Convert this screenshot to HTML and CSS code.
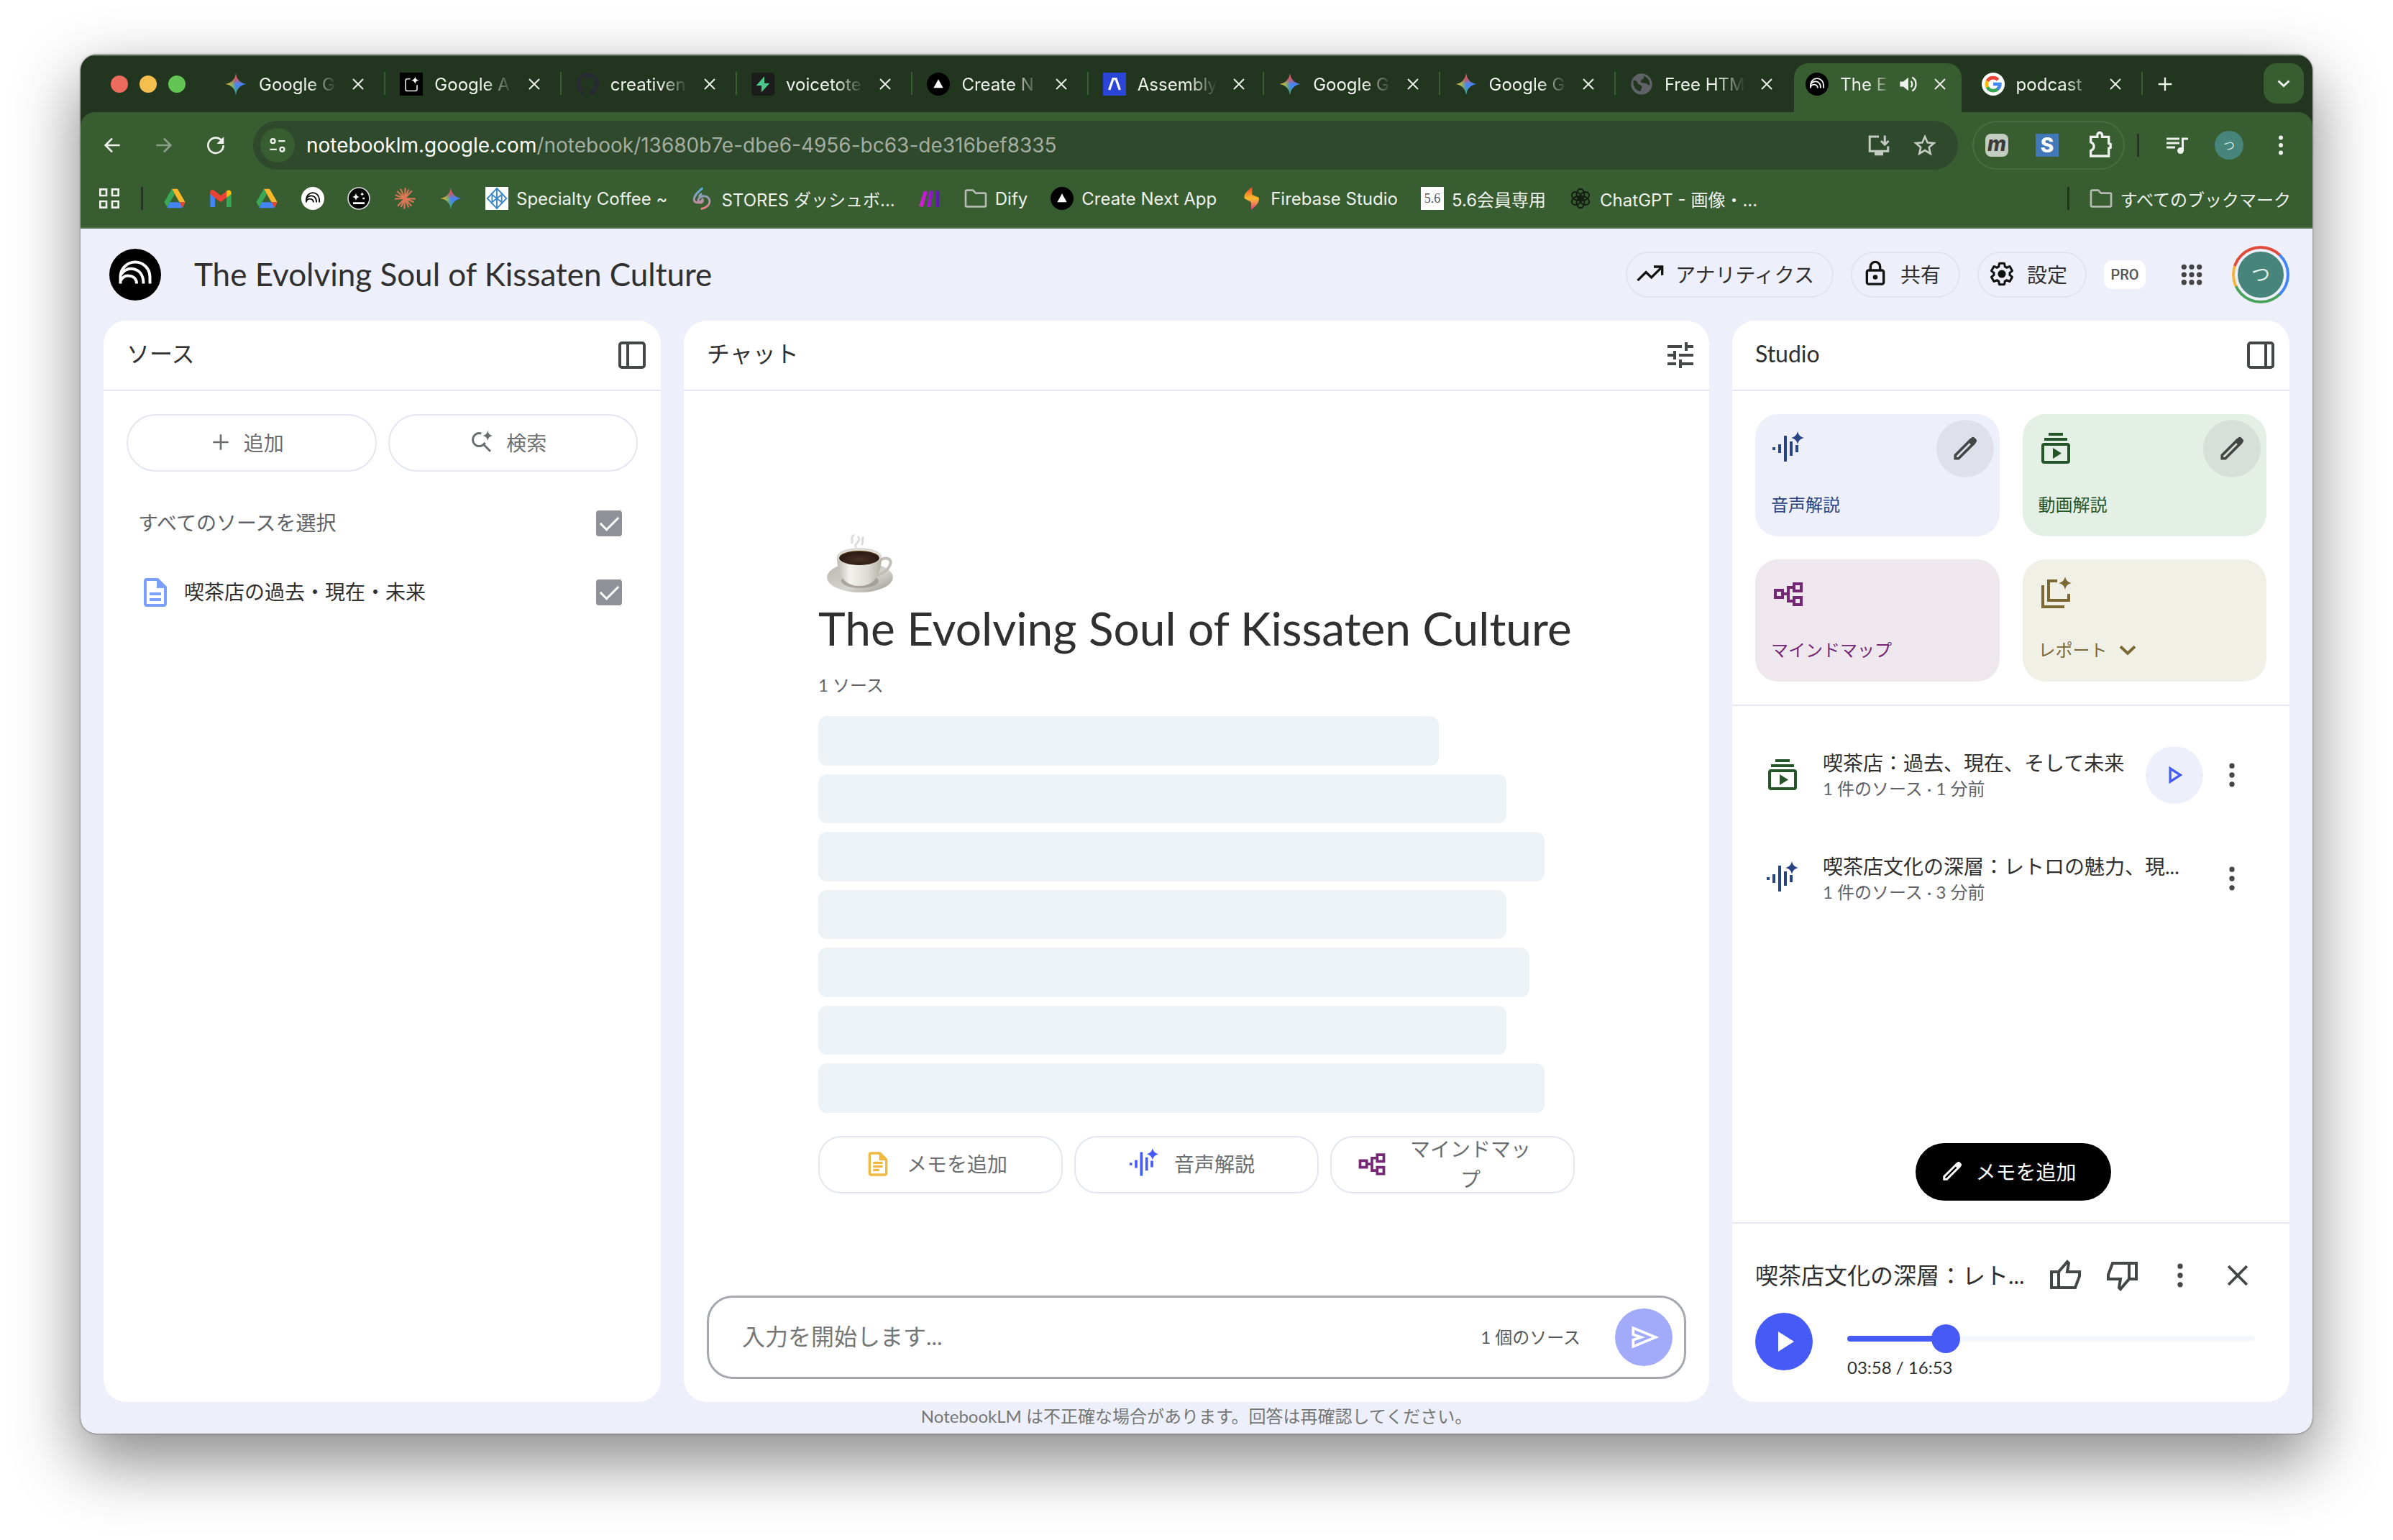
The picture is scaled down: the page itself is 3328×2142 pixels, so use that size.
FILE: index.html
```html
<!DOCTYPE html>
<html lang="ja">
<head>
    <meta charset="UTF-8">
    <meta name="viewport" content="width=device-width, initial-scale=1.0">
    <title>The Evolving Soul of Kissaten Culture - NotebookLM</title>
    <link rel="stylesheet" href="styles.css">
</head>
<body>
    <!-- icon set -->
    <svg class="defs" aria-hidden="true">
        <defs>
            <linearGradient id="gemBase" x1="0" x2="1" y1="0" y2="0">
                <stop offset="0" stop-color="#f5c12e"/><stop offset=".35" stop-color="#7fae6a"/><stop offset=".5" stop-color="#4a86f0"/><stop offset="1" stop-color="#3f82f5"/>
            </linearGradient>
            <linearGradient id="gemTop" x1="0" x2="0" y1="0" y2="1">
                <stop offset="0" stop-color="#ee4a44"/><stop offset=".25" stop-color="#ee4a44" stop-opacity=".8"/><stop offset=".5" stop-color="#ee4a44" stop-opacity="0"/>
            </linearGradient>
            <linearGradient id="gemBottom" x1="0" x2="0" y1="0" y2="1">
                <stop offset=".6" stop-color="#3cb15a" stop-opacity="0"/><stop offset="1" stop-color="#3cb15a"/>
            </linearGradient>
            <linearGradient id="storesFill" x1="0" x2="0" y1="0" y2="1">
                <stop offset="0" stop-color="#4fb3d9"/><stop offset="1" stop-color="#ee7f86"/>
            </linearGradient>
            <linearGradient id="fireFill" x1="0" x2="0" y1="0" y2="1">
                <stop offset="0" stop-color="#e8452c"/><stop offset=".5" stop-color="#fdbb2d"/><stop offset="1" stop-color="#d93a86"/>
            </linearGradient>
            <linearGradient id="makeFill" x1="0" x2="1" y1="0" y2="0">
                <stop offset="0" stop-color="#e321d6"/><stop offset="1" stop-color="#5b14b8"/>
            </linearGradient>
            <linearGradient id="cupFill" x1="0" x2="1" y1="0" y2="0">
                <stop offset="0" stop-color="#bdbab2"/><stop offset=".3" stop-color="#f3f2ee"/><stop offset=".7" stop-color="#dddad3"/><stop offset="1" stop-color="#b3afa6"/>
            </linearGradient>
            <linearGradient id="saucerFill" x1="0" x2="1" y1="0" y2="1">
                <stop offset="0" stop-color="#b9b6af"/><stop offset=".6" stop-color="#d5d3cd"/><stop offset="1" stop-color="#9a978f"/>
            </linearGradient>
            <radialGradient id="coffeeFill" cx=".5" cy=".6" r=".6">
                <stop offset="0" stop-color="#4a3227"/><stop offset=".8" stop-color="#2c1a12"/><stop offset="1" stop-color="#5a3a14"/>
            </radialGradient>

            <symbol id="gemini" viewBox="0 0 24 24">
                <path fill="url(#gemBase)" d="M12 1c.8 6.200 4.800 10.200 11 11-6.200.8-10.200 4.800-11 11-.8-6.200-4.800-10.200-11-11 6.200-.8 10.200-4.800 11-11z"/>
                <path fill="url(#gemTop)" d="M12 1c.8 6.200 4.800 10.200 11 11-6.200.8-10.200 4.800-11 11-.8-6.200-4.800-10.200-11-11 6.200-.8 10.200-4.800 11-11z"/>
                <path fill="url(#gemBottom)" d="M12 1c.8 6.200 4.800 10.200 11 11-6.200.8-10.200 4.800-11 11-.8-6.200-4.800-10.200-11-11 6.200-.8 10.200-4.800 11-11z"/>
            </symbol>
            <symbol id="close" viewBox="0 0 24 24"><path class="line" d="M5 5l14 14M19 5L5 19"/></symbol>
            <symbol id="plus" viewBox="0 0 24 24"><path class="line" d="M12 4v16M4 12h16"/></symbol>
            <symbol id="chevron" viewBox="0 0 24 24"><path class="line bold" d="M4.500 8.500l7.500 7 7.500-7"/></symbol>
            <symbol id="back" viewBox="0 0 24 24"><path class="line" d="M20 12H5M12 5l-7 7 7 7"/></symbol>
            <symbol id="forward" viewBox="0 0 24 24"><path class="line" d="M4 12h15M12 5l7 7-7 7"/></symbol>
            <symbol id="reload" viewBox="0 0 24 24"><path class="line" d="M18.500 7.500A8 8 0 1 0 20 12"/><path fill="currentColor" d="M20.500 3v7.500H13z"/></symbol>
            <symbol id="siteinfo" viewBox="0 0 24 24"><g class="line"><circle cx="6.500" cy="7" r="2.500"/><path d="M13 7h8M3 17h8"/><circle cx="17.500" cy="17" r="2.500"/></g></symbol>
            <symbol id="install" viewBox="0 0 24 24"><path class="line" d="M12 4H3.500v13.500h17V13M17.500 3v8M14 8l3.500 3.500L21 8"/><path fill="currentColor" d="M8 18h8v3.500H8z"/></symbol>
            <symbol id="star" viewBox="0 0 24 24"><path class="line" d="M12 3l2.700 6.200 6.700.6-5.100 4.400 1.500 6.600-5.800-3.500-5.800 3.500 1.500-6.600-5.100-4.400 6.700-.6z"/></symbol>
            <symbol id="puzzle" viewBox="0 0 24 24"><path class="line" d="M4 5h5.500V3.500a1.500 1.500 0 0 1 4 0V5H19v5.500l1.500.5v3l-1.500.5V21H4v-4.500c3.500-1.500 3.500-5.500 0-7z"/></symbol>
            <symbol id="queue" viewBox="0 0 24 24"><path fill="currentColor" d="M14 5H2v2h12zM14 9H2v2h12zM2 15h8v-2H2zM16 5v9.200c-.3-.1-.6-.2-1-.2-1.700 0-3 1.300-3 3s1.300 3 3 3 3-1.300 3-3V7h4V5z"/></symbol>
            <symbol id="dots" viewBox="0 0 24 24"><g fill="currentColor"><circle cx="12" cy="5" r="2"/><circle cx="12" cy="12" r="2"/><circle cx="12" cy="19" r="2"/></g></symbol>
            <symbol id="speaker" viewBox="0 0 24 24"><path fill="currentColor" d="M2 9h4l6-5v16l-6-5H2z"/><path class="line" d="M15 8.500c2 1.500 2 5.500 0 7M16.500 4c6 3 6 13 0 16"/></symbol>
            <symbol id="globe" viewBox="0 0 24 24"><circle cx="12" cy="12" r="11" fill="#5f6368"/><path fill="#22361f" d="M3.500 8c3 0 4 1 4.500 3s3 1 4 3-1 3-1 5.500c-5-.5-8.500-5-7.500-11.500zM12 3c2 0 3 1 2 3s-3 1-3 3 3 2 5 2 3 3 4.500 2c.5-5-3-9.500-8.500-10z"/></symbol>
            <symbol id="github" viewBox="0 0 16 16"><path fill="#272c33" d="M8 0C3.580 0 0 3.580 0 8c0 3.540 2.290 6.530 5.470 7.590.4.070.55-.17.55-.38 0-.19-.01-.82-.01-1.490-2.010.37-2.530-.49-2.690-.94-.09-.23-.48-.94-.82-1.130-.28-.15-.68-.52-.01-.53.63-.01 1.080.58 1.230.82.72 1.210 1.870.87 2.330.66.07-.52.28-.87.51-1.070-1.780-.2-3.640-.89-3.640-3.950 0-.87.31-1.590.82-2.150-.08-.2-.36-1.020.08-2.120 0 0 .67-.21 2.200.82.64-.18 1.320-.27 2-.27s1.360.09 2 .27c1.530-1.040 2.200-.82 2.200-.82.44 1.100.16 1.920.08 2.120.51.56.82 1.270.82 2.150 0 3.070-1.870 3.750-3.650 3.950.29.25.54.73.54 1.480 0 1.070-.01 1.930-.01 2.200 0 .21.15.46.55.38A8.010 8.010 0 0 0 16 8c0-4.420-3.580-8-8-8z"/></symbol>
            <symbol id="aistudio" viewBox="0 0 24 24"><path fill="#000" d="M0 0h24v24H0z"/><path fill="none" stroke="#c9c9c9" stroke-width="1.400" d="M11 6.500H8a2 2 0 0 0-2 2V17a2 2 0 0 0 2 2h8a2 2 0 0 0 2-2v-4"/><path fill="#fff" d="M16 4c.3 2.500 1.500 3.700 4 4-2.500.3-3.700 1.500-4 4-.3-2.500-1.500-3.700-4-4 2.500-.3 3.700-1.500 4-4z"/></symbol>
            <symbol id="supabase" viewBox="0 0 24 24"><rect width="24" height="24" rx="3" fill="#1c1c1c"/><path fill="#4cc98a" d="M13.500 4v7H19l-8.500 9.500V13.500H5z"/></symbol>
            <symbol id="next" viewBox="0 0 24 24"><circle cx="12" cy="12" r="12" fill="#000"/><path fill="#fff" d="M12 7l5 9H7z"/></symbol>
            <symbol id="assembly" viewBox="0 0 24 24"><path fill="#2b45d6" d="M0 0h24v24H0z"/><path fill="none" stroke="#fff" stroke-width="2.500" d="M6.500 18L10.500 6.500h3L17.500 18"/></symbol>
            <symbol id="google" viewBox="0 0 24 24"><circle cx="12" cy="12" r="12" fill="#fff"/><g fill="none" stroke-width="3.500"><path stroke="#ea4335" d="M17 7.500A7 7 0 0 0 5.900 8.800"/><path stroke="#fbbc05" d="M6 8.600a7 7 0 0 0 0 6.800"/><path stroke="#34a853" d="M5.900 15.200A7 7 0 0 0 16.800 17"/><path stroke="#4285f4" d="M16.500 17.300A7 7 0 0 0 19 12h-7"/></g></symbol>
            <symbol id="notebook" viewBox="0 0 72 72"><g fill="none" stroke="currentColor" stroke-width="4"><path d="M15.500 48.500V39a20.500 20.500 0 0 1 41 0v9.500"/><path d="M16 36c5-7 11-9 17-8 9 1.500 14.500 9 14.500 20.500"/><path d="M16 44c3-5.500 7-7 11-6.500 7 .5 11 5 11 11"/></g></symbol>
            <symbol id="drive" viewBox="0 0 24 24"><path fill="#fbb829" d="M9 2h6l8 14h-6z"/><path fill="#3aa757" d="M9 2l3 5.500L4 21l-3-5z"/><path fill="#4285f4" d="M7 16h16l-3 6H4z"/><path fill="#ea4335" d="M17 16h6l-3 6z"/></symbol>
            <symbol id="gmail" viewBox="0 0 24 24"><path fill="#4285f4" d="M1 7l5 4v10H1z"/><path fill="#34a853" d="M18 11l5-4v14h-5z"/><path fill="#ea4335" d="M1 5c0-2 2.500-2.500 4-1.500L12 9l7-5.500v6.800L12 16 1 7.500z"/><path fill="#fbbc04" d="M18 4.500c2-2 5-1 5 1.500v1.500L18 11z"/></symbol>
            <symbol id="spark-face" viewBox="0 0 24 24"><circle cx="12" cy="12" r="11.200" fill="#000" stroke="#ddd" stroke-width="1.200"/><path fill="#fff" d="M9 6c.4 3 1.300 4 4 4.500-2.700.4-3.600 1.500-4 4-.4-2.500-1.300-3.600-4-4 2.700-.5 3.600-1.500 4-4.500zM15.500 5c.2 1.500.8 2.200 2.300 2.500-1.500.3-2.100 1-2.300 2.500-.2-1.500-.8-2.200-2.300-2.500 1.500-.3 2.100-1 2.300-2.500zM6 16h12v2H6zM16 11h2v2h-2z"/></symbol>
            <symbol id="claude" viewBox="0 0 24 24"><path fill="none" stroke="#d97757" stroke-width="1.600" d="M12.500 1L12 12l-.5 11M1.500 12.500L12 12l11 .5M4 4.500L12 12l7 8M19.500 4L12 12l-7.500 8M7.500 2L12 12l4 9.500M16 2.500L12 12l-4 9M2 8.500L12 12l9.500 4"/></symbol>
            <symbol id="coffeeassoc" viewBox="0 0 24 24"><path fill="#fff" d="M0 0h24v24H0z"/><g fill="none" stroke="#3b86c6" stroke-width="1.400"><path d="M12 1.500L22 12 12 22.500 2 12z"/><path d="M12 1v22M7 6v12M17 6v12M7 8l5 4 5-4M7 16l5-4 5 4"/></g></symbol>
            <symbol id="stores" viewBox="0 0 24 24"><g fill="none" stroke="url(#storesFill)" stroke-width="2.200"><path d="M13 1C7 6 3 10 4 14c1 3 6 3 8 0M11 23c6-1 10-5 9-9-1-5-8-6-11-2-2 3 1 6 3 4 2-1 1-3 0-4M12 7c-2 1-3 3-2 4"/></g></symbol>
            <symbol id="make" viewBox="0 0 24 24"><path fill="url(#makeFill)" d="M6 4l4 1-5 16-4-1zM12 4h4l-3 17H9zM18 4h4v17h-4z"/></symbol>
            <symbol id="folder" viewBox="0 0 24 24"><path class="line" d="M1.500 4.500a1 1 0 0 1 1-1H9l3 3h9.500a1 1 0 0 1 1 1v12a1 1 0 0 1-1 1h-19a1 1 0 0 1-1-1z"/></symbol>
            <symbol id="firebase" viewBox="0 0 24 24"><path fill="url(#fireFill)" d="M13 0v8l7 3c1 5-3 9-8 13v-8l-7-4C4 7 8 4 13 0z"/></symbol>
            <symbol id="openai" viewBox="0 0 24 24"><g fill="none" stroke="#152013" stroke-width="1.600"><ellipse cx="12" cy="7.500" rx="4" ry="5.500"/><ellipse cx="12" cy="7.500" rx="4" ry="5.500" transform="rotate(60 12 12)"/><ellipse cx="12" cy="7.500" rx="4" ry="5.500" transform="rotate(120 12 12)"/><ellipse cx="12" cy="7.500" rx="4" ry="5.500" transform="rotate(180 12 12)"/><ellipse cx="12" cy="7.500" rx="4" ry="5.500" transform="rotate(240 12 12)"/><ellipse cx="12" cy="7.500" rx="4" ry="5.500" transform="rotate(300 12 12)"/></g></symbol>
            <symbol id="apps-outline" viewBox="0 0 24 24"><path class="line" d="M2.500 2.500h6.500v6.500H2.500zM15 2.500h6.500v6.500H15zM2.500 15h6.500v6.500H2.500zM15 15h6.500v6.500H15z"/></symbol>
            <symbol id="apps" viewBox="0 0 24 24"><g fill="currentColor"><circle cx="4" cy="4" r="2.700"/><circle cx="12" cy="4" r="2.700"/><circle cx="20" cy="4" r="2.700"/><circle cx="4" cy="12" r="2.700"/><circle cx="12" cy="12" r="2.700"/><circle cx="20" cy="12" r="2.700"/><circle cx="4" cy="20" r="2.700"/><circle cx="12" cy="20" r="2.700"/><circle cx="20" cy="20" r="2.700"/></g></symbol>
            <symbol id="trending" viewBox="0 0 24 24"><path class="line" d="M1.500 17.500l7-7 4.500 4.500L21.500 6.500M15 6h7v7"/></symbol>
            <symbol id="lock" viewBox="0 0 24 24"><g class="line"><rect x="5" y="9" width="14" height="11.500" rx="1.500"/><path d="M8 9V6a4 4 0 0 1 8 0v3"/></g><circle cx="12" cy="14.700" r="2" fill="currentColor"/></symbol>
            <symbol id="gear" viewBox="-1 -1 26 26"><path class="line" d="M19.140 12.940c.04-.3.06-.61.06-.94 0-.32-.02-.64-.07-.94l2.030-1.580c.18-.14.23-.41.12-.61l-1.920-3.320c-.12-.22-.37-.29-.59-.22l-2.390.96c-.5-.38-1.030-.7-1.620-.94l-.36-2.540c-.04-.24-.24-.41-.48-.41h-3.840c-.24 0-.43.17-.47.41l-.36 2.540c-.59.24-1.130.57-1.620.94l-2.390-.96c-.22-.08-.47 0-.59.22L2.740 8.870c-.12.21-.08.47.12.61l2.030 1.580c-.05.3-.09.63-.09.94s.02.64.07.94l-2.030 1.580c-.18.14-.23.41-.12.61l1.920 3.320c.12.22.37.29.59.22l2.390-.96c.5.38 1.030.7 1.620.94l.36 2.540c.05.24.24.41.48.41h3.840c.24 0 .44-.17.47-.41l.36-2.540c.59-.24 1.130-.56 1.620-.94l2.390.96c.22.08.47 0 .59-.22l1.920-3.320c.12-.22.07-.47-.12-.61z"/><circle cx="12" cy="12" r="3.600" fill="currentColor"/></symbol>
            <symbol id="panel-left" viewBox="0 0 24 24"><g class="line"><rect x="3.500" y="3.500" width="17" height="17" rx="1.500"/><path d="M9 3v18"/></g></symbol>
            <symbol id="panel-right" viewBox="0 0 24 24"><g class="line"><rect x="3.500" y="3.500" width="17" height="17" rx="1.500"/><path d="M15.500 3v18"/></g></symbol>
            <symbol id="tune" viewBox="0 0 24 24"><path fill="currentColor" d="M3 17v2h6v-2zM3 5v2h10V5zm10 16v-2h8v-2h-8v-2h-2v6zM7 9v2H3v2h4v2h2V9zm14 4v-2H11v2zm-6-4h2V7h4V5h-4V3h-2z"/></symbol>
            <symbol id="search-spark" viewBox="0 0 24 24"><path class="line" d="M11.500 4A6 6 0 1 0 15 12.500M14 14.500l6 6"/><path fill="currentColor" d="M17.500 1c.5 3 1.700 4.300 4.500 5-2.800.7-4 2-4.500 5-.5-3-1.700-4.300-4.500-5 2.800-.7 4-2 4.500-5z"/></symbol>
            <symbol id="doc" viewBox="0 0 24 24"><path fill="currentColor" d="M8 16h8v2H8zm0-4h8v2H8zm6-10H6c-1.100 0-2 .9-2 2v16c0 1.100.89 2 1.990 2H18c1.100 0 2-.9 2-2V8zm4 18H6V4h7v5h5z"/></symbol>
            <symbol id="note" viewBox="0 0 24 24"><path fill="currentColor" d="M8 16h5v2H8zm0-3h8v2H8zm0-3h8v2H8zm6-8H6c-1.100 0-2 .9-2 2v16c0 1.100.89 2 1.990 2H18c1.100 0 2-.9 2-2V8zm4 18H6V4h7v5h5z"/></symbol>
            <symbol id="audio" viewBox="0 0 24 24"><path class="line" d="M2 11v2M6 9v6M10 3v18M14 7v10M18 9.500v5"/><path fill="currentColor" d="M18.500 0c.6 2.600 1.900 3.800 4.500 4.500-2.600.7-3.900 1.900-4.500 4.500-.6-2.600-1.900-3.800-4.500-4.500 2.600-.7 3.900-1.900 4.500-4.500z"/></symbol>
            <symbol id="video" viewBox="0 0 24 24"><path class="line" d="M7 2h10M4 5.500h16"/><rect class="line" x="3" y="9" width="18" height="12.500" rx="1"/><path fill="currentColor" d="M10 11.500v7.500l6-3.750z"/></symbol>
            <symbol id="mindmap" viewBox="0 0 24 24"><path class="line" d="M3 9.500h5v5H3zM16 5h5v5h-5zM16 14.500h5v5h-5zM8 12h4M16 7.500h-4v9.500h4"/></symbol>
            <symbol id="report" viewBox="0 0 24 24"><path class="line" d="M3 6v15h15M13 3H7v13.500h14V12"/><path fill="currentColor" d="M18.500 0c.6 2.600 1.900 3.800 4.500 4.500-2.600.7-3.900 1.900-4.500 4.500-.6-2.600-1.900-3.800-4.500-4.500 2.600-.7 3.900-1.900 4.500-4.500z"/></symbol>
            <symbol id="pencil" viewBox="0 0 24 24"><path class="line" d="M4.500 19.500V17L16 5.500 18.500 8 7 19.500z"/><path fill="currentColor" d="M14 6.500l2.700-2.700c.8-.8 1.700-.8 2.500 0l1 1c.8.8.8 1.700 0 2.500L17.500 10z"/></symbol>
            <symbol id="play" viewBox="0 0 24 24"><path fill="currentColor" d="M8 5v14l11-7z"/></symbol>
            <symbol id="play-outline" viewBox="0 0 24 24"><path class="line" d="M8.500 6.500v11l8.500-5.500z"/></symbol>
            <symbol id="send" viewBox="0 0 24 24"><path class="line" d="M4 5l17 7-17 7v-5l6-2-6-2z"/></symbol>
            <symbol id="thumb-up" viewBox="0 0 24 24"><path class="line" d="M7.500 20.500H2.500v-11h5zM7.500 9.500l6-7 1 1-1 6H22v3l-3 8H7.500"/></symbol>
            <symbol id="thumb-down" viewBox="0 0 24 24"><path class="line" d="M16.500 3.500h5v11h-5zM16.500 14.500l-6 7-1-1 1-6H2v-3l3-8h11.500"/></symbol>
        </defs>
    </svg>

    <div class="window">
        <div class="tab-strip">
            <div class="lights"><span class="light red"></span><span class="light yellow"></span><span class="light green"></span></div>
            <div class="tabs">
                <div class="tab"><svg class="ic32"><use href="#gemini"/></svg><span class="tab-title">Google G</span><button class="tab-close" aria-label="閉じる"><svg><use href="#close"/></svg></button></div>
                <div class="tab"><svg class="ic32"><use href="#aistudio"/></svg><span class="tab-title">Google A</span><button class="tab-close" aria-label="閉じる"><svg><use href="#close"/></svg></button></div>
                <div class="tab"><svg class="ic32"><use href="#github"/></svg><span class="tab-title">creativen</span><button class="tab-close" aria-label="閉じる"><svg><use href="#close"/></svg></button></div>
                <div class="tab"><svg class="ic32"><use href="#supabase"/></svg><span class="tab-title">voicetote</span><button class="tab-close" aria-label="閉じる"><svg><use href="#close"/></svg></button></div>
                <div class="tab"><svg class="ic32"><use href="#next"/></svg><span class="tab-title">Create N</span><button class="tab-close" aria-label="閉じる"><svg><use href="#close"/></svg></button></div>
                <div class="tab"><svg class="ic32"><use href="#assembly"/></svg><span class="tab-title">Assembly</span><button class="tab-close" aria-label="閉じる"><svg><use href="#close"/></svg></button></div>
                <div class="tab"><svg class="ic32"><use href="#gemini"/></svg><span class="tab-title">Google G</span><button class="tab-close" aria-label="閉じる"><svg><use href="#close"/></svg></button></div>
                <div class="tab"><svg class="ic32"><use href="#gemini"/></svg><span class="tab-title">Google G</span><button class="tab-close" aria-label="閉じる"><svg><use href="#close"/></svg></button></div>
                <div class="tab before-active"><svg class="ic32"><use href="#globe"/></svg><span class="tab-title">Free HTM</span><button class="tab-close" aria-label="閉じる"><svg><use href="#close"/></svg></button></div>
                <div class="tab active"><span class="ic32 nb-badge"><svg class="ic32"><use href="#notebook"/></svg></span><span class="tab-title">The E</span><svg class="ic28 speaker"><use href="#speaker"/></svg><button class="tab-close" aria-label="閉じる"><svg><use href="#close"/></svg></button></div>
                <div class="tab"><svg class="ic32"><use href="#google"/></svg><span class="tab-title">podcast</span><button class="tab-close" aria-label="閉じる"><svg><use href="#close"/></svg></button></div>
            </div>
            <button class="new-tab" aria-label="新しいタブ"><svg class="ic28"><use href="#plus"/></svg></button>
            <button class="tab-search" aria-label="タブを検索"><svg class="ic24"><use href="#chevron"/></svg></button>
        </div>

        <div class="toolbar">
            <div class="nav-row">
                <button class="nav-btn" aria-label="戻る"><svg class="ic32"><use href="#back"/></svg></button>
                <button class="nav-btn dim" aria-label="進む"><svg class="ic32"><use href="#forward"/></svg></button>
                <button class="nav-btn" aria-label="再読み込み"><svg class="ic32"><use href="#reload"/></svg></button>
                <div class="omnibox">
                    <span class="site-info"><svg class="ic28"><use href="#siteinfo"/></svg></span>
                    <div class="url"><span class="host">notebooklm.google.com</span>/notebook/13680b7e-dbe6-4956-bc63-de316bef8335</div>
                    <svg class="ic36"><use href="#install"/></svg>
                    <svg class="ic32"><use href="#star"/></svg>
                </div>
                <div class="extensions">
                    <span class="ext-m">m</span>
                    <span class="ext-s">S</span>
                    <svg class="ic40"><use href="#puzzle"/></svg>
                </div>
                <span class="divider"></span>
                <button class="nav-btn" aria-label="メディア"><svg class="ic36"><use href="#queue"/></svg></button>
                <button class="nav-btn" aria-label="プロフィール"><span class="mini-avatar">つ</span></button>
                <button class="nav-btn" aria-label="メニュー"><svg class="ic36"><use href="#dots"/></svg></button>
            </div>
            <div class="bookmarks">
                <svg class="ic32"><use href="#apps-outline"/></svg>
                <span class="divider"></span>
                <a href="#" aria-label="Drive"><svg class="ic32"><use href="#drive"/></svg></a>
                <a href="#" aria-label="Gmail"><svg class="ic32"><use href="#gmail"/></svg></a>
                <a href="#" aria-label="Drive"><svg class="ic32"><use href="#drive"/></svg></a>
                <a href="#" aria-label="NotebookLM"><span class="ic32 nb-badge light-badge"><svg class="ic32"><use href="#notebook"/></svg></span></a>
                <a href="#" aria-label="AI"><svg class="ic32"><use href="#spark-face"/></svg></a>
                <a href="#" aria-label="Claude"><svg class="ic32"><use href="#claude"/></svg></a>
                <a href="#" aria-label="Gemini"><svg class="ic32"><use href="#gemini"/></svg></a>
                <a href="#"><svg class="ic32"><use href="#coffeeassoc"/></svg>Specialty Coffee ~</a>
                <a href="#"><svg class="ic32"><use href="#stores"/></svg>STORES ダッシュボ...</a>
                <a href="#" aria-label="Make"><svg class="ic32"><use href="#make"/></svg></a>
                <a href="#"><svg class="ic32 grey"><use href="#folder"/></svg>Dify</a>
                <a href="#"><svg class="ic32"><use href="#next"/></svg>Create Next App</a>
                <a href="#"><svg class="ic32"><use href="#firebase"/></svg>Firebase Studio</a>
                <a href="#"><span class="ic32 fav56">5.6</span>5.6会員専用</a>
                <a href="#"><svg class="ic32"><use href="#openai"/></svg>ChatGPT - 画像・...</a>
                <span class="divider push"></span>
                <a href="#"><svg class="ic32 grey"><use href="#folder"/></svg>すべてのブックマーク</a>
            </div>
        </div>

        <div class="app">
            <header class="app-header">
                <a href="#" class="logo" aria-label="NotebookLM"><svg><use href="#notebook"/></svg></a>
                <div class="app-title">The Evolving Soul of Kissaten Culture</div>
                <div class="header-actions">
                    <button class="chip"><svg class="ic40"><use href="#trending"/></svg>アナリティクス</button>
                    <button class="chip"><svg class="ic40"><use href="#lock"/></svg>共有</button>
                    <button class="chip"><svg class="ic40"><use href="#gear"/></svg>設定</button>
                    <span class="pro">PRO</span>
                    <button class="apps-btn" aria-label="アプリ"><svg class="ic32"><use href="#apps"/></svg></button>
                    <span class="avatar"><span>つ</span></span>
                </div>
            </header>

            <main class="panels">
                <section class="panel">
                    <div class="panel-header"><h2>ソース</h2><button class="icon-btn" aria-label="パネルを閉じる"><svg class="ic48"><use href="#panel-left"/></svg></button></div>
                    <div class="source-body">
                        <div class="source-actions">
                            <button class="pill"><svg class="ic32"><use href="#plus"/></svg>追加</button>
                            <button class="pill"><svg class="ic36"><use href="#search-spark"/></svg>検索</button>
                        </div>
                        <div class="source-row select-all"><label for="all">すべてのソースを選択</label><input type="checkbox" id="all" checked></div>
                        <div class="source-row"><svg class="ic48 doc-icon"><use href="#doc"/></svg><label for="src1">喫茶店の過去・現在・未来</label><input type="checkbox" id="src1" checked></div>
                    </div>
                </section>

                <section class="panel">
                    <div class="panel-header"><h2>チャット</h2><button class="icon-btn" aria-label="チャットの設定"><svg class="ic48"><use href="#tune"/></svg></button></div>
                    <div class="chat-body">
                        <div class="overview">
                            <svg class="cup" viewBox="0 0 96 84">
                                <path d="M36 14c4-5-3-8 4-12M43 20c-6-6 9-8 2-16M50 16c4-4-1-8 3-11" fill="none" stroke="#c4c4c4" stroke-opacity=".6" stroke-width="3"/>
                                <ellipse cx="48" cy="61" rx="46" ry="21" fill="url(#saucerFill)"/>
                                <ellipse cx="48" cy="66" rx="26" ry="10" fill="#8f8b82" opacity=".6"/>
                                <path d="M76 37c8-5 17-2 14 6-2 7-11 14-20 16" fill="none" stroke="#c3c0b9" stroke-width="4"/>
                                <path d="M16 32c0 28 12 41 31 41s31-13 31-41z" fill="url(#cupFill)"/>
                                <ellipse cx="47" cy="32" rx="31" ry="12" fill="#dcdad5"/>
                                <ellipse cx="47" cy="34" rx="28" ry="10" fill="url(#coffeeFill)"/>
                            </svg>
                            <h1>The Evolving Soul of Kissaten Culture</h1>
                            <p class="count">1 ソース</p>
                            <div class="skeleton"><span></span><span></span><span></span><span></span><span></span><span></span><span></span></div>
                            <div class="suggestions">
                                <button><svg class="ic40 c-note"><use href="#note"/></svg><span>メモを追加</span></button>
                                <button><svg class="ic44 c-audio"><use href="#audio"/></svg><span>音声解説</span></button>
                                <button><svg class="ic44 c-map"><use href="#mindmap"/></svg><span>マインドマップ</span></button>
                            </div>
                        </div>
                        <form class="prompt">
                            <input type="text" placeholder="入力を開始します..." aria-label="入力">
                            <span class="prompt-count">1 個のソース</span>
                            <button type="button" class="send" aria-label="送信"><svg class="ic44"><use href="#send"/></svg></button>
                        </form>
                    </div>
                </section>

                <section class="panel">
                    <div class="panel-header"><h2>Studio</h2><button class="icon-btn" aria-label="パネルを閉じる"><svg class="ic48"><use href="#panel-right"/></svg></button></div>
                    <div class="cards">
                        <div class="card audio"><svg class="ic48"><use href="#audio"/></svg><span>音声解説</span><button class="edit" aria-label="編集"><svg class="ic44"><use href="#pencil"/></svg></button></div>
                        <div class="card video"><svg class="ic48"><use href="#video"/></svg><span>動画解説</span><button class="edit" aria-label="編集"><svg class="ic44"><use href="#pencil"/></svg></button></div>
                        <div class="card map"><svg class="ic48"><use href="#mindmap"/></svg><span>マインドマップ</span></div>
                        <div class="card report"><svg class="ic48"><use href="#report"/></svg><span>レポート<svg class="ic32"><use href="#chevron"/></svg></span></div>
                    </div>
                    <div class="artifacts">
                        <div class="artifact">
                            <svg class="ic48 c-video"><use href="#video"/></svg>
                            <div class="artifact-text"><h3>喫茶店：過去、現在、そして未来</h3><p>1 件のソース · 1 分前</p></div>
                            <button class="artifact-play" aria-label="再生"><svg class="ic40"><use href="#play-outline"/></svg></button>
                            <button class="more" aria-label="その他"><svg class="ic44"><use href="#dots"/></svg></button>
                        </div>
                        <div class="artifact">
                            <svg class="ic48 c-deep"><use href="#audio"/></svg>
                            <div class="artifact-text"><h3>喫茶店文化の深層：レトロの魅力、現...</h3><p>1 件のソース · 3 分前</p></div>
                            <button class="more" aria-label="その他"><svg class="ic44"><use href="#dots"/></svg></button>
                        </div>
                        <button class="add-note"><svg class="ic36"><use href="#pencil"/></svg>メモを追加</button>
                    </div>
                    <div class="player">
                        <div class="player-top">
                            <div class="player-title">喫茶店文化の深層：レト...</div>
                            <button class="more" aria-label="高評価"><svg class="ic48"><use href="#thumb-up"/></svg></button>
                            <button class="more" aria-label="低評価"><svg class="ic48"><use href="#thumb-down"/></svg></button>
                            <button class="more" aria-label="その他"><svg class="ic44"><use href="#dots"/></svg></button>
                            <button class="more" aria-label="閉じる"><svg class="ic44"><use href="#close"/></svg></button>
                        </div>
                        <div class="player-bottom">
                            <button class="player-play" aria-label="再生"><svg class="ic48"><use href="#play"/></svg></button>
                            <div class="player-track">
                                <input type="range" min="0" max="1013" value="225" aria-label="再生位置">
                                <div class="time">03:58 / 16:53</div>
                            </div>
                        </div>
                    </div>
                </section>
            </main>
            <footer>NotebookLM は不正確な場合があります。回答は再確認してください。</footer>
        </div>
    </div>
</body>
</html>
```
FILE: styles.css
```css
* { box-sizing: border-box; }
body {
    margin: 0;
    min-height: 100vh;
    padding: 76px 112px 148px;
    display: flex;
    background: #fff;
    color: #303030;
    font-family: Lato, "Noto Sans CJK JP", sans-serif;
    font-size: 28px;
}
h1, h2, h3, p { margin: 0; font-weight: 400; }
button {
    border: 0;
    padding: 0;
    background: none;
    color: inherit;
    font: inherit;
    cursor: pointer;
}
a { color: inherit; text-decoration: none; }
svg { flex: none; display: block; }
.defs { position: absolute; width: 0; height: 0; }
.line { fill: none; stroke: currentColor; stroke-width: 2; }
.bold { stroke-width: 3; }
.ic24 { width: 24px; height: 24px; }
.ic28 { width: 28px; height: 28px; }
.ic32 { width: 32px; height: 32px; }
.ic36 { width: 36px; height: 36px; }
.ic40 { width: 40px; height: 40px; }
.ic44 { width: 44px; height: 44px; }
.ic48 { width: 48px; height: 48px; }

.window {
    flex: 1;
    min-width: 0;
    display: flex;
    flex-direction: column;
    border-radius: 22px;
    overflow: hidden;
    background: #22361f;
    box-shadow: 0 0 3px rgba(0, 0, 0, 0.5), 0 36px 90px 4px rgba(0, 0, 0, 0.46);
}

/* browser chrome */
.tab-strip {
    display: flex;
    height: 80px;
    border-top: 2px solid #566b53;
    padding: 0 12px 0 42px;
    font-family: Inter, "Noto Sans CJK JP", sans-serif;
    color: #eef2ec;
}
.lights { display: flex; flex: none; gap: 16px; width: 138px; align-items: center; }
.light { width: 24px; height: 24px; border-radius: 50%; }
.red { background: #ed6a5e; }
.yellow { background: #f5bf4f; }
.green { background: #62c554; }
.tabs { display: flex; flex: 1; min-width: 0; }
.tab {
    position: relative;
    flex: 1;
    min-width: 0;
    display: flex;
    align-items: center;
    padding: 0 20px;
    font-size: 24px;
}
.tab::after {
    content: "";
    width: 2px;
    height: 32px;
    background: #385d31;
    position: absolute;
    right: 0;
    top: 22px;
}
.tab.before-active::after, .tab.active::after { display: none; }
.tab-title {
    flex: 1;
    margin: 0 12px 0 16px;
    white-space: nowrap;
    -webkit-mask-image: linear-gradient(90deg, #000 65%, transparent);
    mask-image: linear-gradient(90deg, #000 65%, transparent);
}
.tab-close svg { width: 24px; height: 24px; }
.tab-close { padding: 0 6px; }
.tab.active::before {
    content: "";
    position: absolute;
    inset: 10px 8px 0 4px;
    border-radius: 20px 20px 0 0;
    background: #385d31;
}
.tab.active > * { position: relative; }
.tab.active .tab-close { margin-left: 12px; }
.nb-badge { display: block; flex: none; border-radius: 50%; background: #000; color: #fff; }
.light-badge { background: #fff; color: #000; }
.new-tab { width: 62px; flex: none; display: grid; place-items: center; }
.tab-search {
    width: 56px;
    height: 56px;
    flex: none;
    margin: 10px 0 0 106px;
    border-radius: 18px;
    background: #385d31;
    display: grid;
    place-items: center;
}
.toolbar {
    background: #385d31;
    border-radius: 20px 20px 0 0;
    border-bottom: 2px solid #567350;
    padding-bottom: 12px;
    color: #eef2ec;
    font-family: Inter, "Noto Sans CJK JP", sans-serif;
}
.nav-row { display: flex; align-items: center; height: 92px; padding: 0 8px; }
.nav-btn { width: 72px; height: 68px; display: grid; place-items: center; flex: none; }
.dim { opacity: 0.45; }
.omnibox {
    flex: 1;
    height: 68px;
    margin: 0 20px 0 16px;
    padding: 0 30px 0 10px;
    border-radius: 34px;
    background: #2e492c;
    display: flex;
    align-items: center;
    gap: 30px;
    color: #c4cbc2;
}
.site-info {
    width: 48px;
    height: 48px;
    margin-right: -14px;
    border-radius: 50%;
    background: #385d31;
    color: #eef2ec;
    display: grid;
    place-items: center;
}
.url { flex: 1; font-size: 28px; color: #a3ada1; }
.host { color: #fff; }
.extensions {
    width: 212px;
    height: 68px;
    border: 2px solid #4a6c44;
    border-radius: 34px;
    padding: 0 12px 0 16px;
    display: flex;
    align-items: center;
    justify-content: space-between;
}
.ext-m, .ext-s {
    width: 32px;
    height: 32px;
    line-height: 28px;
    text-align: center;
    font-weight: 800;
    font-size: 28px;
}
.ext-m { background: #c3ccc1; color: #3a3a3a; border-radius: 8px; font-style: italic; }
.ext-s { background: #4179b8; color: #fff; line-height: 32px; }
.divider { width: 3px; height: 32px; background: #22361f; margin: 0 17px; flex: none; }
.mini-avatar {
    width: 40px;
    height: 40px;
    border-radius: 50%;
    background: #47857a;
    color: #cfe6e0;
    font-size: 16px;
    line-height: 40px;
}
.bookmarks {
    display: flex;
    align-items: center;
    gap: 32px;
    height: 56px;
    padding: 0 30px 0 24px;
    font-size: 24px;
}
.bookmarks a { display: flex; align-items: center; gap: 11px; white-space: nowrap; }
.bookmarks .divider { margin: 0 -4px; }
.bookmarks .push { margin-left: auto; }
.grey { color: #b5bab3; }
.fav56 {
    background: #fff;
    color: #555;
    font: 18px/32px "Liberation Serif", serif;
    text-align: center;
}

/* app */
.app { flex: 1; display: flex; flex-direction: column; background: #edeffa; }
.app-header { display: flex; align-items: center; height: 128px; padding: 0 32px 0 40px; }
.logo { width: 72px; height: 72px; border-radius: 50%; background: #000; color: #fff; }
.logo svg { width: 72px; height: 72px; }
.app-title { margin-left: 46px; font-size: 44px; line-height: 52px; padding-bottom: 2px; flex: 1; }
.header-actions { display: flex; align-items: center; gap: 24px; }
.chip {
    height: 64px;
    padding: 0 25px 2px 12px;
    border: 2px solid #e2e4ef;
    border-radius: 32px;
    display: flex;
    align-items: center;
    gap: 15px;
    font-size: 28px;
}
.chip svg { color: #111; }
.pro {
    width: 58px;
    height: 40px;
    border-radius: 12px;
    background: #fff;
    font: 500 20px/40px Roboto, sans-serif;
    text-align: center;
    color: #555;
}
.apps-btn { width: 80px; height: 72px; margin-right: -8px; display: grid; place-items: center; color: #444; }
.avatar {
    width: 80px;
    height: 80px;
    padding: 4px;
    border-radius: 50%;
    background: conic-gradient(#e04a3a 0 12%, #4285f4 12% 38%, #4aa35c 38% 68%, #f2b53a 68% 80%, #e04a3a 80%);
}
.avatar span {
    display: block;
    height: 72px;
    border: 4px solid #edeffa;
    border-radius: 50%;
    background: #47857a;
    color: #e4f3ef;
    font-size: 26px;
    line-height: 62px;
    text-align: center;
}
.panels {
    flex: 1;
    display: grid;
    grid-template-columns: minmax(0, 25fr) minmax(0, 46fr) minmax(0, 25fr);
    gap: 32px;
    padding: 0 32px;
}
.panel {
    background: #fff;
    border-radius: 32px;
    display: flex;
    flex-direction: column;
    overflow: hidden;
}
.panel-header {
    height: 98px;
    padding: 0 14px 0 32px;
    border-bottom: 2px solid #e3e7ef;
    display: flex;
    align-items: center;
    justify-content: space-between;
}
.panel-header h2 { font-size: 32px; line-height: 48px; padding-bottom: 4px; }
.icon-btn { width: 48px; height: 48px; margin-right: 2px; color: #444746; }
footer {
    height: 44px;
    line-height: 40px;
    font-size: 24px;
    color: #747775;
    text-align: center;
}

/* sources */
.source-body { padding: 32px; }
.source-actions { display: flex; gap: 16px; margin-bottom: 24px; }
.pill {
    flex: 1;
    height: 80px;
    padding: 0 14px 2px 0;
    border: 2px solid #e3e6f0;
    border-radius: 40px;
    display: flex;
    align-items: center;
    justify-content: center;
    gap: 16px;
    font-size: 28px;
    color: #6b6e70;
}
.source-row { display: flex; align-items: center; height: 96px; padding: 0 22px 0 16px; }
.source-row label { flex: 1; padding-bottom: 4px; }
.select-all { color: #5f6368; }
.doc-icon { color: #7ba0fb; margin-right: 16px; }
input[type="checkbox"] {
    appearance: none;
    width: 36px;
    height: 36px;
    margin: 0;
    border-radius: 4px;
    background: #8f9199;
    display: grid;
    place-items: center;
}
input[type="checkbox"]:checked::after {
    content: "";
    width: 22px;
    height: 11px;
    border: solid #fff;
    border-width: 0 0 3px 3px;
    transform: translateY(-3px) rotate(-45deg);
}

/* chat */
.chat-body { flex: 1; display: flex; flex-direction: column; padding: 0 32px 32px; }
.overview {
    flex: 1;
    width: 100%;
    max-width: 1052px;
    align-self: center;
    display: flex;
    flex-direction: column;
    justify-content: center;
    padding-top: 56px;
}
.cup { width: 96px; height: 84px; margin-left: 10px; }
.overview h1 {
    margin-top: 6px;
    font-size: 64px;
    line-height: 84px;
    white-space: nowrap;
}
.count { margin: 20px 0 26px; font-size: 24px; line-height: 34px; color: #5f6368; }
.skeleton { display: flex; flex-direction: column; gap: 12px; height: 552px; }
.skeleton span { flex: 1; width: 91%; border-radius: 12px; background: #edf2f7; }
.skeleton span:nth-child(1) { width: 82%; }
.skeleton span:nth-child(3), .skeleton span:nth-child(7) { width: 96%; }
.skeleton span:nth-child(5) { width: 94%; }
.suggestions { display: flex; gap: 16px; margin-top: 32px; }
.suggestions button {
    flex: 1;
    height: 80px;
    padding: 0 48px 2px 34px;
    border: 2px solid #e3e6f0;
    border-radius: 32px;
    display: flex;
    align-items: center;
    justify-content: center;
    gap: 20px;
    line-height: 42px;
    color: #6b6e70;
}
.c-note { color: #efb93f; }
.c-audio { color: #465af5; }
.c-map { color: #742774; }
.c-video { color: #24562a; }
.c-deep { color: #284482; }
.prompt {
    height: 116px;
    padding: 0 16px 0 46px;
    border: 3px solid #a6a8b0;
    border-radius: 36px;
    display: flex;
    align-items: center;
}
.prompt input {
    flex: 1;
    border: 0;
    outline: 0;
    background: none;
    font: inherit;
    font-size: 32px;
    padding: 0 0 4px;
}
.prompt input::placeholder { color: #757775; opacity: 1; }
.prompt-count { margin-right: 48px; padding-bottom: 4px; font-size: 24px; color: #55585a; }
.send {
    width: 80px;
    height: 80px;
    border-radius: 50%;
    background: #a1abfa;
    color: #fff;
    display: grid;
    place-items: center;
}

/* studio */
.cards {
    display: grid;
    grid-template-columns: 1fr 1fr;
    gap: 32px;
    padding: 32px;
    border-bottom: 2px solid #e3e7ef;
}
.card {
    position: relative;
    height: 170px;
    padding: 24px 24px 26px 22px;
    border-radius: 32px;
    display: flex;
    flex-direction: column;
    justify-content: space-between;
    font-size: 24px;
    line-height: 36px;
}
.card span { display: flex; align-items: center; gap: 12px; }
.audio { background: #edeffa; color: #284482; }
.video { background: #e4efe6; color: #24562a; }
.map { background: #efe7ee; color: #742774; }
.report { background: #f1f0e7; color: #7b6834; }
.edit {
    position: absolute;
    top: 8px;
    right: 8px;
    width: 80px;
    height: 80px;
    border-radius: 50%;
    background: rgba(0, 0, 0, 0.06);
    color: #444746;
    display: grid;
    place-items: center;
}
.artifacts { flex: 1; display: flex; flex-direction: column; padding: 24px 40px 30px 46px; }
.artifact { display: flex; align-items: center; height: 144px; }
.artifact-text { flex: 1; margin-left: 32px; white-space: nowrap; }
.artifact h3 { font-size: 28px; line-height: 38px; }
.artifact p { font-size: 24px; line-height: 34px; color: #5f6368; }
.artifact-play {
    width: 80px;
    height: 80px;
    border-radius: 50%;
    background: #edeffa;
    color: #465af5;
    display: grid;
    place-items: center;
}
.more { width: 80px; height: 80px; display: grid; place-items: center; color: #444746; flex: none; }
.add-note {
    width: 272px;
    height: 80px;
    margin: auto auto 0;
    padding: 0 14px 2px 0;
    border-radius: 40px;
    background: #000;
    color: #fff;
    display: flex;
    align-items: center;
    justify-content: center;
    gap: 14px;
}
.player { border-top: 2px solid #e3e7ef; padding: 32px 32px 36px; }
.player-top { display: flex; align-items: center; height: 80px; }
.player-title { flex: 1; font-size: 32px; white-space: nowrap; padding-bottom: 4px; }
.player-bottom { display: flex; gap: 48px; margin-top: 12px; }
.player-play {
    width: 80px;
    height: 80px;
    border-radius: 50%;
    background: #465af5;
    color: #fff;
    display: grid;
    place-items: center;
}
.player-track { flex: 1; padding: 16px 16px 0 0; }
.time { margin-top: 8px; font-size: 24px; line-height: 24px; }
input[type="range"] {
    appearance: none;
    display: block;
    width: 100%;
    height: 40px;
    margin: 0;
    background: none;
}
input[type="range"]::-webkit-slider-runnable-track {
    height: 8px;
    border-radius: 4px;
    background: linear-gradient(90deg, #465af5 24%, #f3f7fe 24%);
}
input[type="range"]::-webkit-slider-thumb {
    appearance: none;
    width: 40px;
    height: 40px;
    margin-top: -16px;
    border-radius: 50%;
    background: #465af5;
}
```
